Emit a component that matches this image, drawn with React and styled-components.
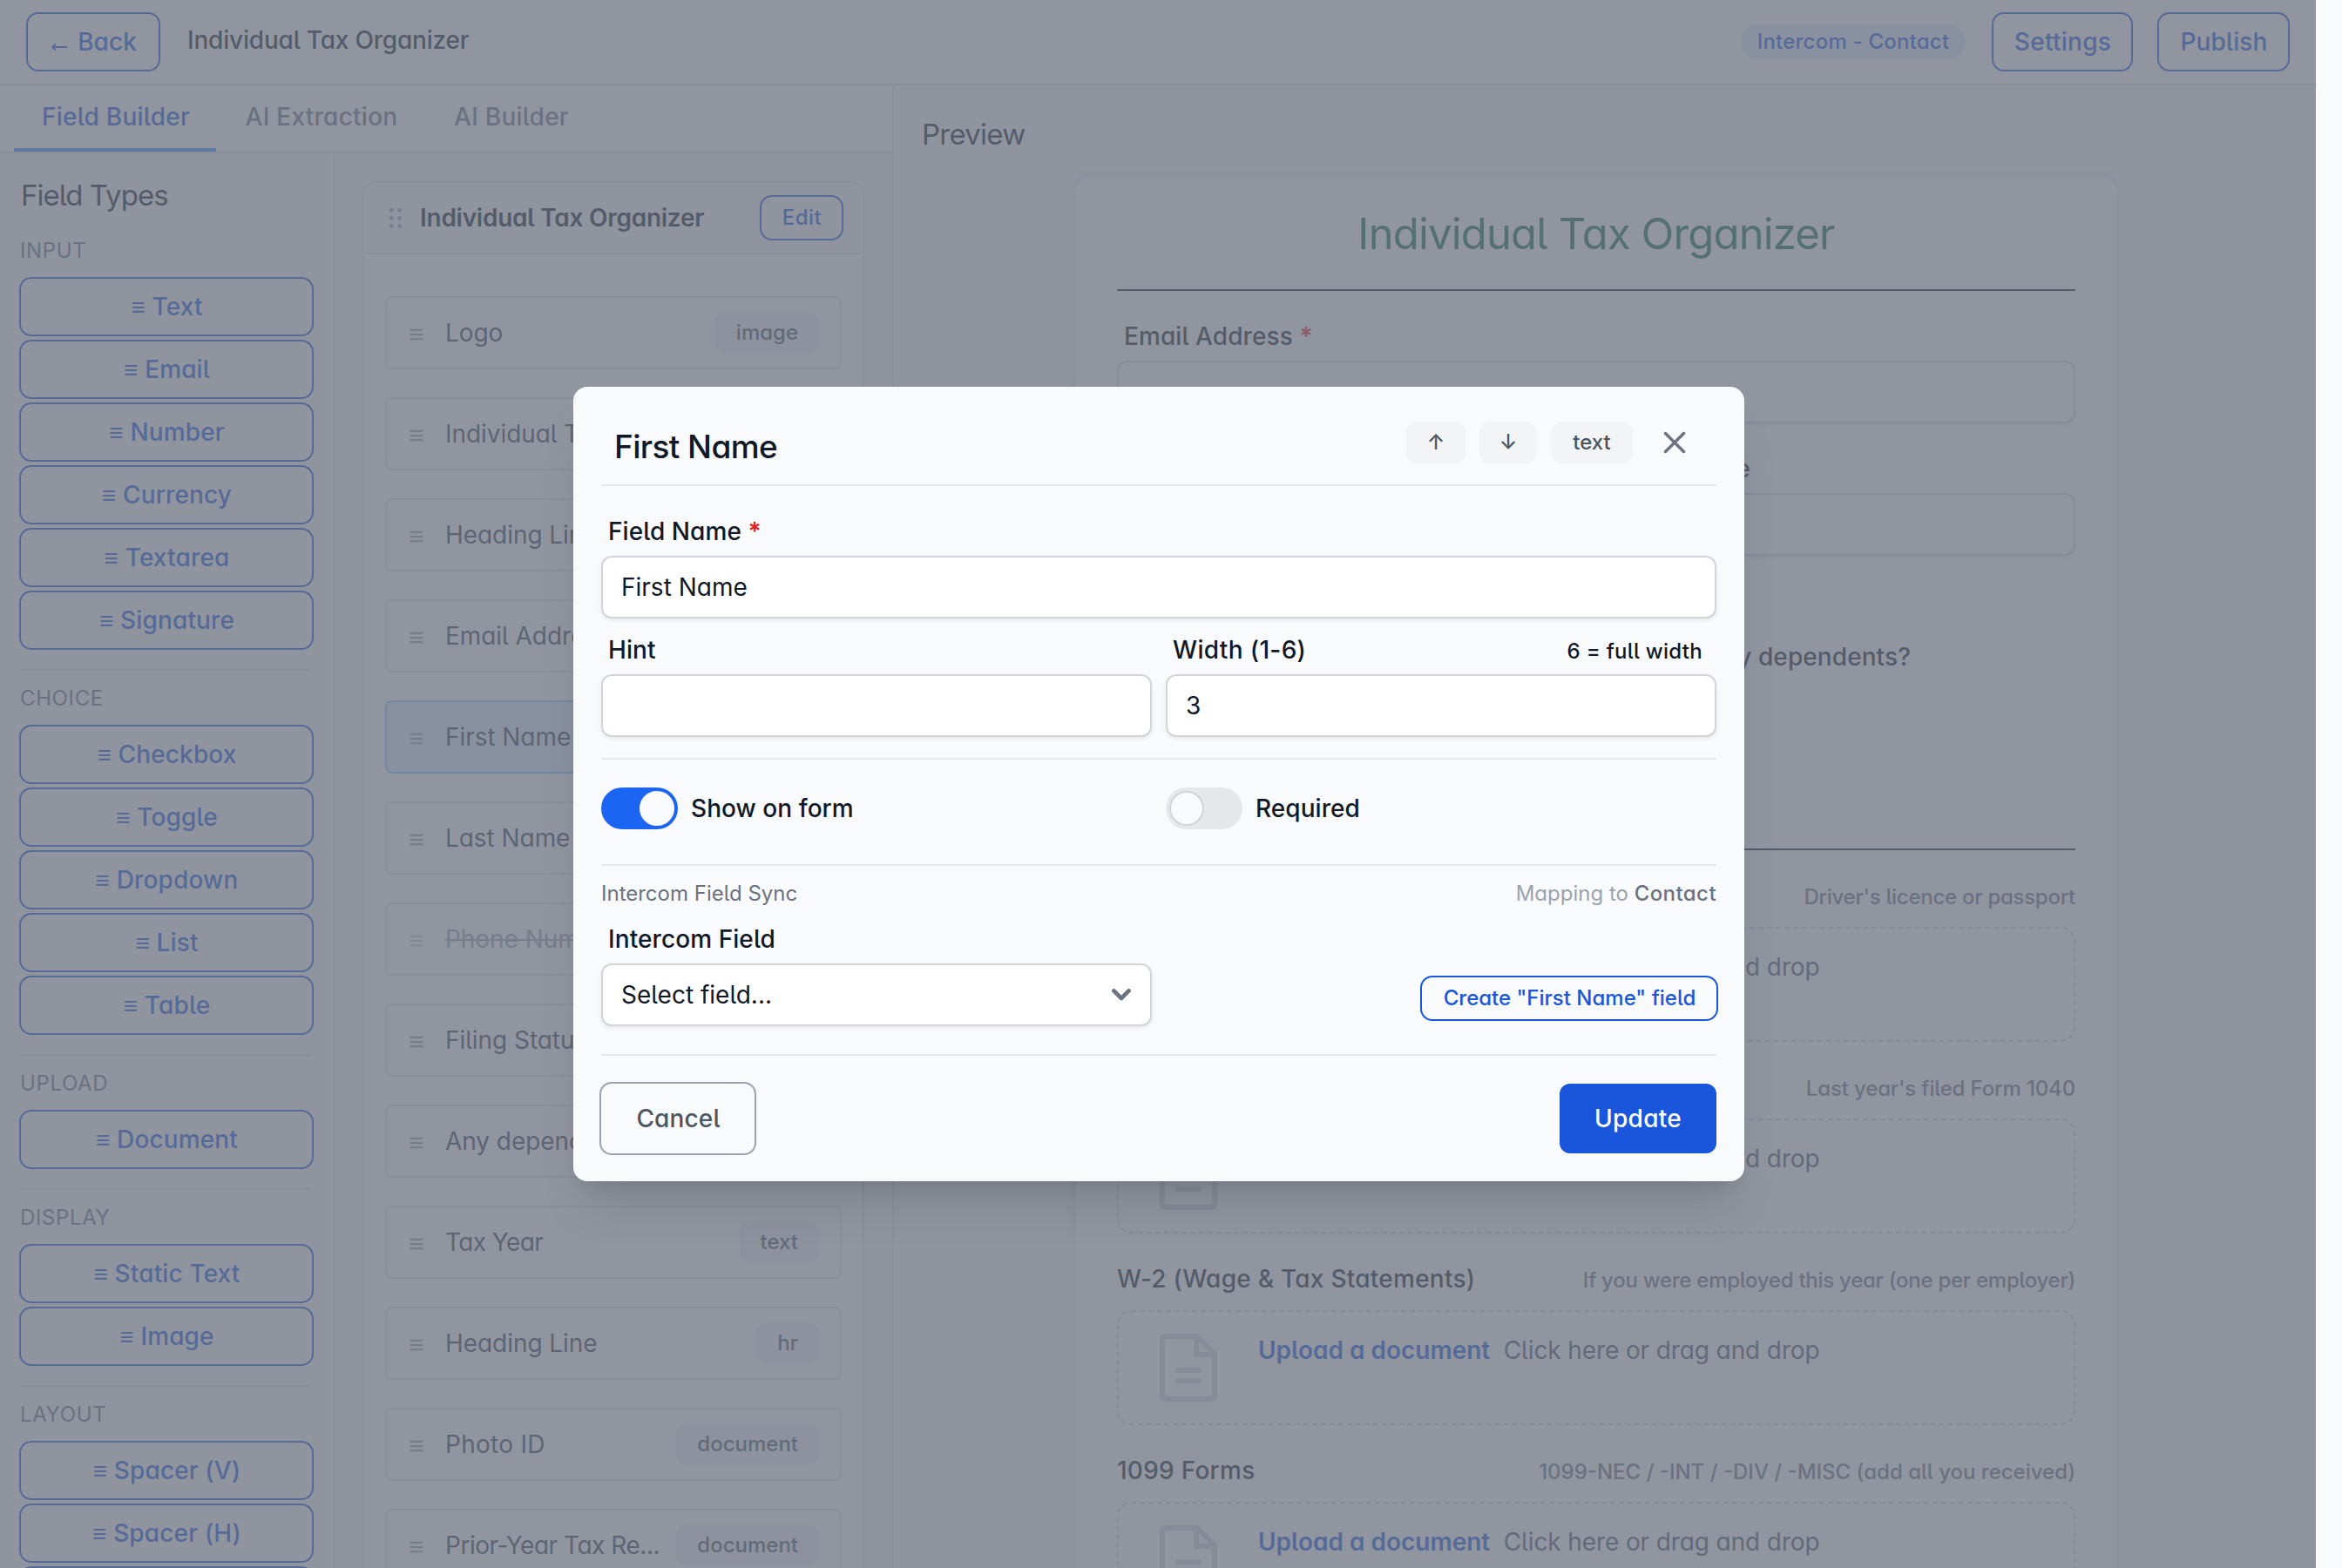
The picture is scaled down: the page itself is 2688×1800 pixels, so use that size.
import React from 'react';
import styled, { createGlobalStyle, css } from 'styled-components';

const c = {
  white: '#ffffff',
  gray50: '#f9fafb',
  gray100: '#f3f4f6',
  gray200: '#e5e7eb',
  gray300: '#d1d5db',
  gray400: '#9ca3af',
  gray500: '#6b7280',
  gray600: '#4b5563',
  gray700: '#374151',
  gray900: '#111827',
  blue: '#1a56db',
  blueSwitch: '#1c64f2',
  red: '#e81e1e',
  green: '#166e44',
};

const Global = createGlobalStyle`
  *, *::before, *::after { box-sizing: border-box; }
  body {
    margin: 0;
    background: #f9fafc;
    color: ${c.gray900};
    font-family: Inter, "Open Sans", sans-serif;
    font-size: 28px;
    line-height: 40px;
    font-feature-settings: 'cv11', 'cv05';
  }
`;

/* ---------- shell ---------- */

const Page = styled.div`
  width: 2688px;
  height: 1800px;
  overflow: hidden;
  background: #f9fafc;
`;

const Screen = styled.div`
  position: relative;
  width: 2658px;
  height: 1800px;
  overflow: hidden;
  display: flex;
  flex-direction: column;
  background: ${c.gray50};
`;

const Text = styled.span`
  white-space: pre;
  font-size: ${(p) => p.$size || 28}px;
  font-weight: ${(p) => p.$weight || 400};
  letter-spacing: ${(p) => p.$track || 0}em;
  color: ${(p) => p.$color || 'inherit'};
`;

const OutlineButton = styled.button`
  flex: none;
  display: flex;
  align-items: center;
  justify-content: center;
  width: ${(p) => (p.$w ? `${p.$w}px` : 'auto')};
  height: ${(p) => p.$h || 68}px;
  padding: 0 0 0 1px;
  border: 2px solid ${(p) => p.$border || c.blue};
  border-radius: 14px;
  background: transparent;
  color: ${(p) => p.$color || c.blue};
  font: inherit;
  font-feature-settings: inherit;
  font-size: ${(p) => p.$size || 28}px;
  font-weight: 500;
  letter-spacing: ${(p) => p.$track || 0.005}em;
  white-space: pre;
`;

/* ---------- top bar ---------- */

const TopBar = styled.header`
  flex: none;
  display: flex;
  align-items: center;
  height: 98px;
  padding: 0 30px;
  border-bottom: 2px solid ${c.gray200};
  background: ${c.white};
`;

const PageTitle = styled.h1`
  flex: 1;
  margin: 0 0 4px 31px;
  font-size: 28px;
  font-weight: 500;
  letter-spacing: -0.007em;
`;

const BackArrow = styled.svg`
  margin: 12px 12px 0 1px;
`;

const Actions = styled.div`
  display: flex;
  align-items: center;
  gap: 28px;
`;

const SyncBadge = styled.span`
  display: flex;
  align-items: center;
  justify-content: center;
  width: 258px;
  height: 40px;
  margin-right: 2px;
  border-radius: 20px;
  background: #e1effe;
  color: ${c.blue};
  font-size: 24px;
  font-weight: 500;
  letter-spacing: 0.009em;
`;

/* ---------- builder ---------- */

const Body = styled.div`
  flex: 1;
  min-height: 0;
  display: flex;
`;

const Builder = styled.section`
  flex: none;
  display: flex;
  flex-direction: column;
  width: 1026px;
  border-right: 2px solid ${c.gray200};
`;

const Tabs = styled.nav`
  flex: none;
  display: flex;
  height: 78px;
  padding-left: 16px;
  border-bottom: 2px solid ${c.gray200};
  background: ${c.white};
`;

const Tab = styled.span`
  display: flex;
  align-items: center;
  justify-content: center;
  width: ${(p) => p.$w}px;
  padding: 0 0 ${(p) => (p.$active ? 1 : 5)}px 2px;
  border-bottom: ${(p) => (p.$active ? '4px solid #3f83f8' : 'none')};
  color: ${(p) => (p.$active ? c.blue : c.gray500)};
  font-weight: 500;
  letter-spacing: 0.009em;
`;

const Columns = styled.div`
  flex: 1;
  min-height: 0;
  display: flex;
`;

const Sidebar = styled.aside`
  flex: none;
  width: 384px;
  overflow: hidden;
  padding: 28px 22px 0;
  border-right: 2px solid ${c.gray200};
`;

const SidebarTitle = styled.h2`
  margin: 0 0 12px 2px;
  font-size: 33px;
  line-height: 40px;
  font-weight: 400;
  letter-spacing: -0.03em;
`;

const Group = styled.div`
  display: flex;
  flex-direction: column;
  gap: 4px;
`;

const GroupDivider = styled.div`
  height: 2px;
  margin: 22px 2px 0;
  background: ${c.gray200};
`;

const GroupLabel = styled.div`
  height: 62px;
  padding-top: 1px;
  margin-left: 1px;
  font-size: 24px;
  line-height: 62px;
  letter-spacing: 0.026em;
  color: ${c.gray500};
`;

const ListPane = styled.div`
  flex: 1;
  min-width: 0;
  overflow: hidden;
  padding: 32px;
`;

const FormCard = styled.div`
  height: 1800px;
  border: 2px solid ${c.gray200};
  border-radius: 16px;
  background: ${c.white};
  overflow: hidden;
`;

const FormCardHead = styled.div`
  display: flex;
  align-items: center;
  height: 82px;
  padding: 0 22px 0 29px;
  border-bottom: 2px solid ${c.gray200};
  background: ${c.gray50};
`;

const FormCardTitle = styled.h3`
  flex: 1;
  margin: 0 0 0 21px;
  font-size: 28px;
  font-weight: 600;
  letter-spacing: -0.009em;
`;

const FieldList = styled.div`
  display: flex;
  flex-direction: column;
  gap: 32px;
  padding: 48px 24px;
`;

const FieldRow = styled.div`
  flex: none;
  display: flex;
  align-items: center;
  height: 84px;
  padding: 0 24px 0 25px;
  border: 2px solid ${c.gray200};
  border-radius: 8px;
  background: ${c.white};
  color: ${c.gray700};
  ${(p) =>
    p.$state === 'selected' &&
    css`
      border-color: #93c5fd;
      background: #e3eefe;
    `}
`;

const RowHandle = styled.span`
  flex: none;
  width: 42px;
  padding-top: 1px;
  font-size: 30px;
  color: ${c.gray400};
  opacity: ${(p) => (p.$dim ? 0.5 : 1)};
`;

const RowName = styled.span`
  flex: 1;
  white-space: pre;
  letter-spacing: ${(p) => p.$track || -0.002}em;
  ${(p) =>
    p.$off &&
    css`
      text-decoration: line-through;
      text-decoration-thickness: 2px;
      opacity: 0.5;
    `}
`;

const Pill = styled.span`
  flex: none;
  display: flex;
  align-items: center;
  justify-content: center;
  height: 48px;
  width: ${(p) => (p.$w ? `${p.$w}px` : 'auto')};
  padding: 0 ${(p) => (p.$w ? 0 : 24)}px;
  border-radius: 12px;
  background: ${c.gray100};
  color: ${c.gray600};
  font-size: 24px;
  font-weight: 500;
`;

/* ---------- preview ---------- */

const Preview = styled.section`
  flex: 1;
  min-width: 0;
  overflow: hidden;
  padding: 32px 20px 0 0;
  display: flex;
  flex-direction: column;
  align-items: center;
  background: ${c.gray50};
`;

const PreviewTitle = styled.h2`
  align-self: stretch;
  margin: 0 0 26px 32px;
  font-size: 33px;
  line-height: 48px;
  font-weight: 400;
  letter-spacing: -0.023em;
`;

const Paper = styled.div`
  flex: none;
  width: 1196px;
  height: 1900px;
  padding: 32px 48px;
  border-radius: 16px;
  background: ${c.white};
  box-shadow: 0 2px 6px rgba(0, 0, 0, 0.1), 0 0 12px rgba(0, 0, 0, 0.06);
  display: flex;
  flex-direction: column;
  gap: 32px;
`;

const PaperTitle = styled.h2`
  height: 64px;
  margin: 0;
  padding-top: 1px;
  text-align: center;
  font-size: 49px;
  line-height: 64px;
  font-weight: 400;
  letter-spacing: -0.017em;
  color: ${c.green};
`;

const PaperRule = styled.div`
  flex: none;
  height: 2px;
  background: ${c.gray900};
`;

const FieldGrid = styled.div`
  flex: none;
  display: grid;
  grid-template-columns: ${(p) => (p.$split ? '1fr 1fr' : '1fr')};
  gap: 16px;
  height: ${(p) => (p.$tall ? '272px' : 'auto')};
  padding-top: ${(p) => (p.$tall ? 64 : 0)}px;
`;

const Field = styled.div`
  display: flex;
  flex-direction: column;
  gap: 8px;
`;

const FieldLabel = styled.div`
  display: flex;
  align-items: baseline;
  justify-content: ${(p) => (p.$end ? 'flex-end' : 'space-between')};
  height: 40px;
  padding: 0 ${(p) => p.$end || 16}px 0 8px;
  font-weight: 500;
  letter-spacing: 0.003em;
  white-space: pre;
`;

const Star = styled.span`
  color: ${c.red};
  font-weight: 600;
`;

const Input = styled.div`
  display: flex;
  align-items: center;
  justify-content: space-between;
  height: 72px;
  padding: 0 22px 0 21px;
  border: 2px solid ${c.gray300};
  border-radius: 12px;
  background: ${c.white};
  box-shadow: 0 2px 4px rgba(0, 0, 0, 0.08);
`;

const DocBlock = styled.div`
  flex: none;
  display: flex;
  flex-direction: column;
  gap: 14px;
`;

const DocHead = styled.div`
  display: flex;
  align-items: baseline;
  justify-content: space-between;
  height: 42px;
  font-weight: 500;
  letter-spacing: 0.009em;
  white-space: pre;
`;

const DropZone = styled.div`
  display: flex;
  height: 132px;
  padding: 25px 0 0 47px;
  border: 2px dashed ${c.gray300};
  border-radius: 16px;
`;

const DropText = styled.div`
  margin-left: 47px;
  line-height: 39px;
  white-space: pre;
  color: ${c.gray600};
`;

/* ---------- dialog ---------- */

const Overlay = styled.div`
  position: absolute;
  inset: 0;
  display: flex;
  align-items: center;
  justify-content: center;
  padding-left: 2px;
  background: rgba(107, 114, 128, 0.75);
`;

const Dialog = styled.div`
  width: 1344px;
  height: 912px;
  padding: 0 32px;
  border-radius: 16px;
  background: #f9fafc;
  box-shadow: 0 40px 50px -10px rgba(0, 0, 0, 0.1), 0 16px 20px -12px rgba(0, 0, 0, 0.1);
`;

const DialogHead = styled.div`
  display: flex;
  align-items: center;
  gap: 16px;
  height: 114px;
  padding: 16px 36px 0 15px;
  border-bottom: 2px solid ${c.gray200};
`;

const DialogTitle = styled.h2`
  flex: 1;
  margin: 0;
  padding-top: 9px;
  font-size: 37px;
  line-height: 44px;
  font-weight: 500;
  letter-spacing: -0.017em;
`;

const CloseIcon = styled.svg`
  margin-left: 20px;
  overflow: visible;
`;

const DialogFields = styled.div`
  display: grid;
  grid-template-columns: 1fr 1fr;
  gap: 16px;
  padding: 32px 0 24px;
  border-bottom: 2px solid ${c.gray200};
`;

const FullField = styled(Field)`
  grid-column: 1 / -1;
`;

const SwitchRow = styled.div`
  display: grid;
  grid-template-columns: 1fr 1fr;
  gap: 16px;
  padding: 32px 0 40px;
  border-bottom: 2px solid ${c.gray200};
`;

const SwitchLabel = styled.div`
  display: flex;
  align-items: center;
  gap: 15px;
  height: 48px;
  font-weight: 500;
  letter-spacing: 0.002em;
`;

const Switch = styled.span`
  display: flex;
  align-items: center;
  justify-content: ${(p) => (p.$on ? 'flex-end' : 'flex-start')};
  width: 88px;
  height: 48px;
  padding: 4px;
  border-radius: 24px;
  background: ${(p) => (p.$on ? c.blueSwitch : c.gray200)};

  &::after {
    content: '';
    width: 40px;
    height: 40px;
    border-radius: 50%;
    border: 2px solid ${(p) => (p.$on ? c.gray50 : c.gray300)};
    background: #f9fafc;
  }
`;

const SyncHead = styled.div`
  display: flex;
  justify-content: space-between;
  height: 47px;
  padding-top: 16px;
  font-size: 24px;
  line-height: 32px;
  color: ${c.gray500};
`;

const SyncRow = styled.div`
  display: flex;
  align-items: flex-end;
  justify-content: space-between;
  margin: 17px -2px 32px 0;
`;

const SyncField = styled(Field)`
  width: 632px;
`;

const CreateSlot = styled.div`
  padding-bottom: 6px;
`;

const DialogRule = styled.div`
  height: 2px;
  background: ${c.gray200};
`;

const DialogFoot = styled.div`
  display: flex;
  align-items: center;
  justify-content: space-between;
  height: 144px;
  margin-left: -2px;
`;

const PrimaryButton = styled.button`
  width: 180px;
  height: 80px;
  padding: 0;
  border: 0;
  border-radius: 12px;
  background: ${c.blue};
  color: ${c.white};
  font: inherit;
  font-feature-settings: inherit;
  font-weight: 500;
  letter-spacing: 0.01em;
`;

/* ---------- icons ---------- */

const DragDots = () => (
  <svg width="14" height="23" viewBox="0 0 14 23" fill={c.gray400}>
    {[2.3, 11.5, 20.5].map((y) => (
      <React.Fragment key={y}>
        <circle cx="2.4" cy={y} r="2.4" />
        <circle cx="11.6" cy={y} r="2.4" />
      </React.Fragment>
    ))}
  </svg>
);

const DocIcon = () => (
  <svg width="66" height="78" viewBox="0 0 66 78" fill="none" stroke={c.gray300} strokeWidth="6">
    <path d="M6 3H43L63 23V72a3 3 0 0 1-3 3H6a3 3 0 0 1-3-3V6a3 3 0 0 1 3-3Z" />
    <path d="M42 3V24H63" />
    <path d="M21 42H45M21 54H45" strokeLinecap="round" />
  </svg>
);

/* ---------- content ---------- */

const groups = [
  ['INPUT', ['Text', 'Email', 'Number', 'Currency', 'Textarea', 'Signature']],
  ['CHOICE', ['Checkbox', 'Toggle', 'Dropdown', 'List', 'Table']],
  ['UPLOAD', ['Document']],
  ['DISPLAY', ['Static Text', 'Image']],
  ['LAYOUT', ['Spacer (V)', 'Spacer (H)', 'Line']],
];

const rows = [
  { name: 'Logo', kind: 'image' },
  { name: 'Individual Tax Or…', kind: 'static' },
  { name: 'Heading Line', kind: 'hr' },
  { name: 'Email Address', kind: 'email' },
  { name: 'First Name', kind: 'text', state: 'selected' },
  { name: 'Last Name', kind: 'text' },
  { name: 'Phone Number', kind: 'text', state: 'off' },
  { name: 'Filing Status', kind: 'select' },
  { name: 'Any dependents', kind: 'radio' },
  { name: 'Tax Year', kind: 'text', track: -0.022 },
  { name: 'Heading Line', kind: 'hr' },
  { name: 'Photo ID', kind: 'document', track: 0.01 },
  { name: 'Prior-Year Tax Re...', kind: 'document', track: -0.017 },
];

const docs = [
  { name: 'Photo ID', hint: "Driver's licence or passport", track: -0.011 },
  { name: 'Prior-Year Tax Return', hint: "Last year's filed Form 1040", track: -0.006 },
  { name: 'W-2 (Wage & Tax Statements)', hint: 'If you were employed this year (one per employer)', track: -0.011 },
  { name: '1099 Forms', hint: '1099-NEC / -INT / -DIV / -MISC (add all you received)', track: 0 },
];

export default function App() {
  return (
    <Page>
      <Global />
      <Screen>
        <TopBar>
          <OutlineButton $w={154} $track={0.001}>
            <BackArrow width="18" height="8" viewBox="0 0 18 8" fill="none" stroke={c.blue} strokeWidth="1.9">
              <path d="M1.5 4H18M4.8 0.6L1.2 4L4.8 7.4" />
            </BackArrow>
            Back
          </OutlineButton>
          <PageTitle>Individual Tax Organizer</PageTitle>
          <Actions>
            <SyncBadge>Intercom - Contact</SyncBadge>
            <OutlineButton $w={162} $track={0.01}>Settings</OutlineButton>
            <OutlineButton $w={152}>Publish</OutlineButton>
          </Actions>
        </TopBar>
        <Body>
          <Builder>
            <Tabs>
              <Tab $active $w={232}>Field Builder</Tab>
              <Tab $w={240}>AI Extraction</Tab>
              <Tab $w={196}>AI Builder</Tab>
            </Tabs>
            <Columns>
              <Sidebar>
                <SidebarTitle>Field Types</SidebarTitle>
                {groups.map(([label, items], i) => (
                  <React.Fragment key={label}>
                    {i > 0 && <GroupDivider />}
                    <GroupLabel>{label}</GroupLabel>
                    <Group>
                      {items.map((item) => (
                        <OutlineButton key={item}>≡ {item}</OutlineButton>
                      ))}
                    </Group>
                  </React.Fragment>
                ))}
              </Sidebar>
              <ListPane>
                <FormCard>
                  <FormCardHead>
                    <DragDots />
                    <FormCardTitle>Individual Tax Organizer</FormCardTitle>
                    <OutlineButton $w={96} $h={52} $size={24} $track={0.02}>Edit</OutlineButton>
                  </FormCardHead>
                  <FieldList>
                    {rows.map(({ name, kind, state, track }, i) => (
                      <FieldRow key={i} $state={state}>
                        <RowHandle $dim={state === 'off'}>≡</RowHandle>
                        <RowName $off={state === 'off'} $track={track}>{name}</RowName>
                        <Pill>{kind}</Pill>
                      </FieldRow>
                    ))}
                  </FieldList>
                </FormCard>
              </ListPane>
            </Columns>
          </Builder>
          <Preview>
            <PreviewTitle>Preview</PreviewTitle>
            <Paper>
              <PaperTitle>Individual Tax Organizer</PaperTitle>
              <PaperRule />
              <FieldGrid>
                <Field>
                  <FieldLabel>
                    <span>Email Address <Star>*</Star></span>
                  </FieldLabel>
                  <Input />
                </Field>
              </FieldGrid>
              <FieldGrid $split>
                <Field>
                  <FieldLabel>First Name</FieldLabel>
                  <Input />
                </Field>
                <Field>
                  <FieldLabel $end={373}>Last Name</FieldLabel>
                  <Input />
                </Field>
              </FieldGrid>
              <FieldGrid $split $tall>
                <FieldLabel>Filing Status</FieldLabel>
                <FieldLabel $end={189}>Any dependents?</FieldLabel>
              </FieldGrid>
              <PaperRule />
              {docs.map(({ name, hint, track }) => (
                <DocBlock key={name}>
                  <DocHead>
                    {name}
                    <Text $size={24} $weight={500} $color={c.gray500} $track={track}>{hint}</Text>
                  </DocHead>
                  <DropZone>
                    <DocIcon />
                    <DropText>
                      <Text $weight={600} $color={c.blue}>Upload a document</Text>
                      <Text $track={-0.004}>{'  Click here or drag and drop'}</Text>
                    </DropText>
                  </DropZone>
                </DocBlock>
              ))}
            </Paper>
          </Preview>
        </Body>

        <Overlay>
          <Dialog>
            <DialogHead>
              <DialogTitle>First Name</DialogTitle>
              <Pill $w={68}>↑</Pill>
              <Pill $w={66}>↓</Pill>
              <Pill $w={94}>text</Pill>
              <CloseIcon width="24" height="24" viewBox="0 0 24 24" fill="none" stroke={c.gray500} strokeWidth="3.4" strokeLinecap="round">
                <path d="M1.5 1.5L22.5 22.5M22.5 1.5L1.5 22.5" />
              </CloseIcon>
            </DialogHead>

            <DialogFields>
              <FullField>
                <FieldLabel>
                  <span>Field Name <Star>*</Star></span>
                </FieldLabel>
                <Input>First Name</Input>
              </FullField>
              <Field>
                <FieldLabel>Hint</FieldLabel>
                <Input />
              </Field>
              <Field>
                <FieldLabel>
                  <Text $weight={500} $track={0.012}>Width (1-6)</Text>
                  <Text $weight={500} $size={24} $track={0.012}>6 = full width</Text>
                </FieldLabel>
                <Input>3</Input>
              </Field>
            </DialogFields>

            <SwitchRow>
              <SwitchLabel><Switch $on />Show on form</SwitchLabel>
              <SwitchLabel><Switch />Required</SwitchLabel>
            </SwitchRow>

            <SyncHead>
              <Text $size={24}>Intercom Field Sync</Text>
              <span>
                <Text $size={24} $color={c.gray400}>{'Mapping to '}</Text>
                <Text $size={24} $weight={500} $track={0.018}>Contact</Text>
              </span>
            </SyncHead>

            <SyncRow>
              <SyncField>
                <FieldLabel>Intercom Field</FieldLabel>
                <Input>
                  Select field...
                  <svg width="22" height="14" viewBox="0 0 22 14" fill="none" stroke={c.gray500} strokeWidth="4.6" strokeLinecap="round" strokeLinejoin="round">
                    <path d="M2.4 2.4L11 11L19.6 2.4" />
                  </svg>
                </Input>
              </SyncField>
              <CreateSlot>
                <OutlineButton $w={342} $h={52} $size={24} $track={0.0001}>Create "First Name" field</OutlineButton>
              </CreateSlot>
            </SyncRow>

            <DialogRule />
            <DialogFoot>
              <OutlineButton $w={180} $h={84} $color={c.gray600} $border={c.gray400}>Cancel</OutlineButton>
              <PrimaryButton>Update</PrimaryButton>
            </DialogFoot>
          </Dialog>
        </Overlay>
      </Screen>
    </Page>
  );
}
